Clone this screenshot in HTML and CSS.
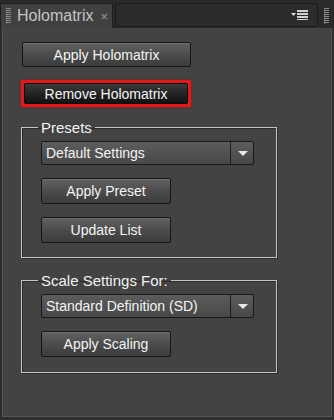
FILE: index.html
```html
<!DOCTYPE html>
<html lang="en">
<head>
    <meta charset="UTF-8">
    <title>Holomatrix</title>
    <link rel="stylesheet" href="styles.css">
</head>
<body>
    <div class="tabbar">
        <div class="tab">
            <span class="grip"></span>
            <span class="tab-title">Holomatrix</span>
            <span class="tab-close">×</span>
        </div>
        <div class="tab-fill">
            <svg class="menu-icon" width="18" height="10" viewBox="0 0 18 10">
                <path d="M0 3 L5 3 L2.5 6 Z" fill="#d8d8d8"/>
                <rect x="6" y="0" width="11" height="2" fill="#d0d0d0"/>
                <rect x="6" y="3" width="11" height="2" fill="#d0d0d0"/>
                <rect x="6" y="6" width="11" height="2" fill="#d0d0d0"/>
                <rect x="6" y="9" width="11" height="1" fill="#d0d0d0"/>
            </svg>
        </div>
        <div class="side-grip"><span class="grip"></span></div>
    </div>

    <div class="panel">
        <div class="btn wide">Apply Holomatrix</div>
        <div class="highlight">
            <div class="btn wide dark">Remove Holomatrix</div>
        </div>

        <fieldset class="group presets">
            <legend>Presets</legend>
            <div class="select">
                <span class="select-value">Default Settings</span>
                <span class="select-arrow"></span>
            </div>
            <div class="btn">Apply Preset</div>
            <div class="btn">Update List</div>
        </fieldset>

        <fieldset class="group scale">
            <legend>Scale Settings For:</legend>
            <div class="select">
                <span class="select-value">Standard Definition (SD)</span>
                <span class="select-arrow"></span>
            </div>
            <div class="btn">Apply Scaling</div>
        </fieldset>
    </div>
</body>
</html>
```

FILE: styles.css
```css
body {
    margin: 0;
    width: 334px;
    height: 420px;
    background: #2e2e2e;
    font-family: 'Liberation Sans', Arial, sans-serif;
    color: #f2f2f2;
    overflow: hidden;
}

.tabbar {
    display: flex;
    height: 28px;
    background: #2a2a2a;
}

.tab {
    width: 106px;
    display: flex;
    align-items: center;
    background: #404040;
    border: 1px solid #1f1f1f;
    border-bottom: none;
    border-radius: 2px 2px 0 0;
    margin-top: 3px;
    padding-left: 5px;
}

.grip {
    width: 4px;
    height: 16px;
    background: repeating-linear-gradient(to bottom, #8a8a8a 0 1px, transparent 1px 2px);
    border-left: 1px dotted #6a6a6a;
}

.tab-title {
    margin-left: 6px;
    font-size: 16px;
    color: #c4c4c4;
}

.tab-close {
    margin-left: 7px;
    font-size: 13px;
    color: #9a9a9a;
}

.tab-fill {
    flex: 1;
    display: flex;
    align-items: center;
    justify-content: flex-end;
    margin: 3px 0 1px 2px;
    background: #2c2c2c;
    border: 1px solid #1a1a1a;
    border-radius: 2px;
    padding-right: 8px;
}

.menu-icon {
    display: block;
}

.side-grip {
    width: 16px;
    display: flex;
    align-items: center;
    justify-content: center;
    margin-top: 3px;
}

.panel {
    height: 389px;
    margin: 0 2px;
    background: #434343;
    border: 1px solid #555;
    border-top: none;
    padding: 14px 0 0 19px;
    box-sizing: border-box;
    display: flex;
    flex-direction: column;
    align-items: flex-start;
}

.btn {
    width: 128px;
    height: 24px;
    display: flex;
    align-items: center;
    justify-content: center;
    font-size: 14px;
    color: #f4f4f4;
    background: linear-gradient(to bottom, #626262, #4a4a4a 55%, #3c3c3c);
    border: 1px solid #161616;
    border-radius: 2px;
    box-shadow: inset 0 1px 0 #6e6e6e;
}

.btn.wide {
    width: 167px;
    height: 23px;
}

.btn.dark {
    width: 162px;
    height: 19px;
    background: linear-gradient(to bottom, #3a3a3a, #222 55%, #121212);
    box-shadow: none;
    border-color: #0a0a0a;
}

.highlight {
    margin: 13px 0 0 -1px;
    border: 3px solid #e41818;
    box-shadow: 0 0 2px #a01010;
}

.group {
    width: 256px;
    margin: 12px 0 0 -1px;
    padding: 5px 0 14px 19px;
    border: 1px solid #c4c4c4;
    box-shadow: 1px 1px 0 #2c2c2c, inset 1px 1px 0 #2c2c2c;
    box-sizing: border-box;
    display: flex;
    flex-direction: column;
    gap: 13px;
}

.group legend {
    margin-left: -3px;
    padding: 0 3px;
    font-size: 15px;
    color: #f2f2f2;
}

.scale {
    margin-top: 14px;
    padding-bottom: 15px;
}

.select {
    width: 213px;
    height: 24px;
    display: flex;
    box-sizing: border-box;
    border: 1px solid #181818;
    border-radius: 2px;
    background: linear-gradient(to bottom, #5c5c5c, #484848);
}

.select-value {
    flex: 1;
    padding-left: 4px;
    display: flex;
    align-items: center;
    font-size: 14px;
    color: #f4f4f4;
    border-right: 1px solid #1c1c1c;
}

.select-arrow {
    width: 22px;
    position: relative;
}

.select-arrow::after {
    content: "";
    position: absolute;
    left: 7px;
    top: 9px;
    border-left: 5px solid transparent;
    border-right: 5px solid transparent;
    border-top: 5px solid #e8e8e8;
}
```
